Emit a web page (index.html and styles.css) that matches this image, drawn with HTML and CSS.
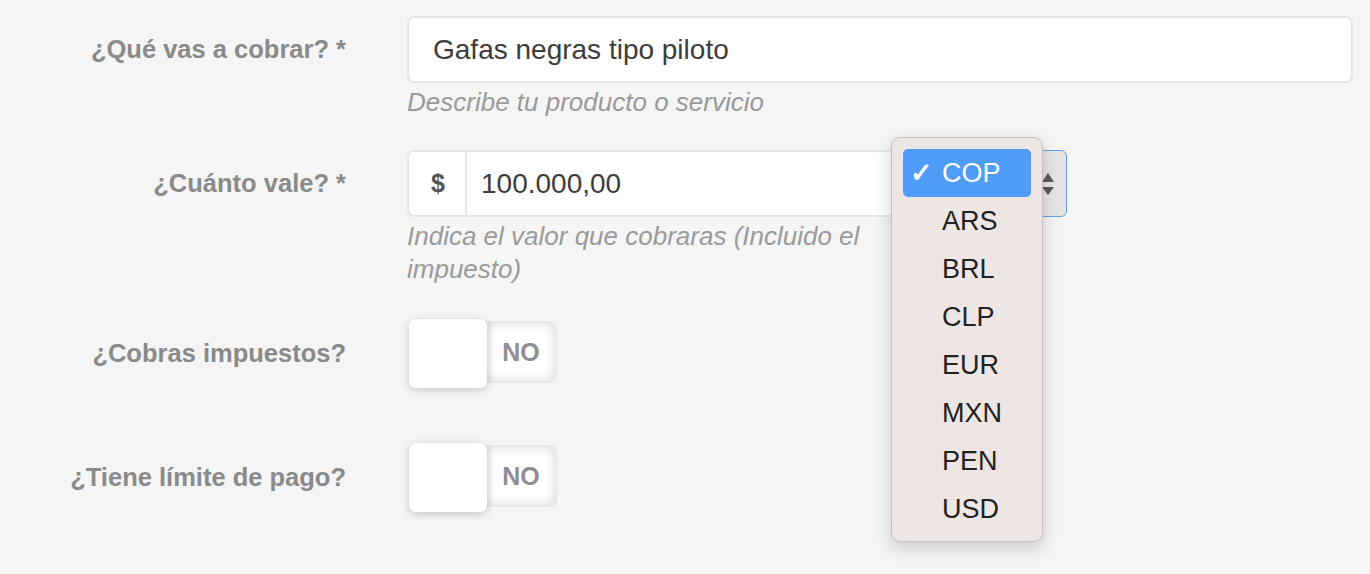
FILE: index.html
```html
<!DOCTYPE html>
<html lang="es">
<head>
<meta charset="utf-8">
<link rel="stylesheet" href="styles.css">
</head>
<body>
<form class="form">
  <div class="row row-1">
    <div class="label"><span>¿Qué vas a cobrar? *</span></div>
    <div class="control">
      <div class="input">Gafas negras tipo piloto</div>
      <div class="help">Describe tu producto o servicio</div>
    </div>
  </div>
  <div class="row row-2">
    <div class="label"><span>¿Cuánto vale? *</span></div>
    <div class="control">
      <div class="group">
        <div class="addon">$</div>
        <div class="group-input">100.000,00</div>
        <div class="select">
          <span class="arrows">
            <svg width="14" height="26" viewBox="0 0 14 26"><path d="M7 2 L13 11 L1 11 Z" fill="#5a5a5a"/><path d="M1 16 L13 16 L7 24 Z" fill="#5a5a5a"/></svg>
          </span>
        </div>
        <ul class="menu">
          <li class="item active"><span class="check">✓</span>COP</li>
          <li class="item">ARS</li>
          <li class="item">BRL</li>
          <li class="item">CLP</li>
          <li class="item">EUR</li>
          <li class="item">MXN</li>
          <li class="item">PEN</li>
          <li class="item">USD</li>
        </ul>
      </div>
      <div class="help help-narrow">Indica el valor que cobraras (Incluido el impuesto)</div>
    </div>
  </div>
  <div class="row row-3">
    <div class="label label-toggle"><span>¿Cobras impuestos?</span></div>
    <div class="control">
      <div class="toggle"><div class="knob"></div><div class="track">NO</div></div>
    </div>
  </div>
  <div class="row row-4">
    <div class="label label-toggle"><span>¿Tiene límite de pago?</span></div>
    <div class="control">
      <div class="toggle"><div class="knob"></div><div class="track">NO</div></div>
    </div>
  </div>
</form>
</body>
</html>
```

FILE: styles.css
```css
* { box-sizing: border-box; }
html, body { margin: 0; padding: 0; }
body {
  background: #f5f5f5;
  font-family: "Liberation Sans", Arial, Helvetica, sans-serif;
  width: 1370px;
  height: 574px;
  overflow: hidden;
}
.form {
  padding: 16px 17px 0 0;
}
.row {
  display: flex;
  gap: 61px;
}
.row-1 { margin-bottom: 31px; }
.row-2 { margin-bottom: 33px; }
.row-3 { margin-bottom: 55px; }
.label {
  width: 346px;
  height: 67px;
  flex: none;
  display: flex;
  align-items: center;
  justify-content: flex-end;
  font-weight: bold;
  font-size: 25.5px;
  color: #8a8a8a;
  padding-bottom: 1px;
}
.label-toggle { height: 69px; padding-bottom: 0; }
.control { flex: 1; }
.input {
  height: 67px;
  background: #fff;
  border: 2px solid #e6e6e6;
  border-radius: 7px;
  display: flex;
  align-items: center;
  padding: 0 0 0 24px;
  font-size: 28px;
  color: #3c3c3c;
}
.help {
  font-style: italic;
  font-size: 26px;
  line-height: 33px;
  padding-top: 3px;
  color: #9a9a9a;
}
.help-narrow { width: 470px; }
.group {
  position: relative;
  display: flex;
  height: 67px;
  width: 660px;
}
.addon {
  width: 58px;
  flex: none;
  background: #fff;
  border: 2px solid #e6e6e6;
  border-right: none;
  border-radius: 7px 0 0 7px;
  display: flex;
  align-items: center;
  justify-content: center;
  font-weight: bold;
  font-size: 25px;
  color: #555;
  padding-left: 2px;
}
.group-input {
  flex: 1;
  background: #fff;
  border: 2px solid #e6e6e6;
  border-right: none;
  display: flex;
  align-items: center;
  padding-left: 14px;
  font-size: 28px;
  color: #3c3c3c;
}
.select {
  width: 170px;
  flex: none;
  border: 1.5px solid #5ea2ea;
  border-radius: 0 6px 6px 0;
  background: linear-gradient(to right, #f0f0f0, #e4e4e4);
  display: flex;
  align-items: center;
  justify-content: flex-end;
  padding-right: 11px;
}
.arrows { display: flex; }
.menu {
  position: absolute;
  left: 484px;
  top: -13px;
  width: 152px;
  height: 405px;
  margin: 0;
  padding: 11px 11px 0 11px;
  list-style: none;
  background: #ede6e5;
  border: 1px solid #c6c0bf;
  border-radius: 9px;
  box-shadow: 0 6px 18px rgba(0,0,0,0.18);
  z-index: 5;
}
.item {
  height: 48px;
  display: flex;
  align-items: center;
  padding-left: 39px;
  font-size: 27px;
  color: #222;
  border-radius: 5px;
}
.item.active {
  background: #4f9cf9;
  color: #fff;
  padding-left: 7px;
}
.check {
  width: 32px;
  font-size: 27px;
  font-weight: bold;
}
.toggle {
  display: flex;
  align-items: flex-start;
  height: 69px;
}
.knob {
  width: 78px;
  height: 69px;
  margin-left: 2px;
  background: #fff;
  border-radius: 7px;
  box-shadow: 0 2px 8px rgba(0,0,0,0.2);
  position: relative;
  z-index: 2;
}
.track {
  margin-top: 2px;
  margin-left: -2px;
  width: 72px;
  height: 62px;
  border: 2px solid #e8e8e8;
  border-left: none;
  border-radius: 0 7px 7px 0;
  background: #fff;
  box-shadow: inset 0 0 12px rgba(0,0,0,0.16);
  display: flex;
  align-items: center;
  justify-content: center;
  padding-left: 2px;
  font-weight: bold;
  font-size: 25px;
  color: #8e8e93;
}
```
